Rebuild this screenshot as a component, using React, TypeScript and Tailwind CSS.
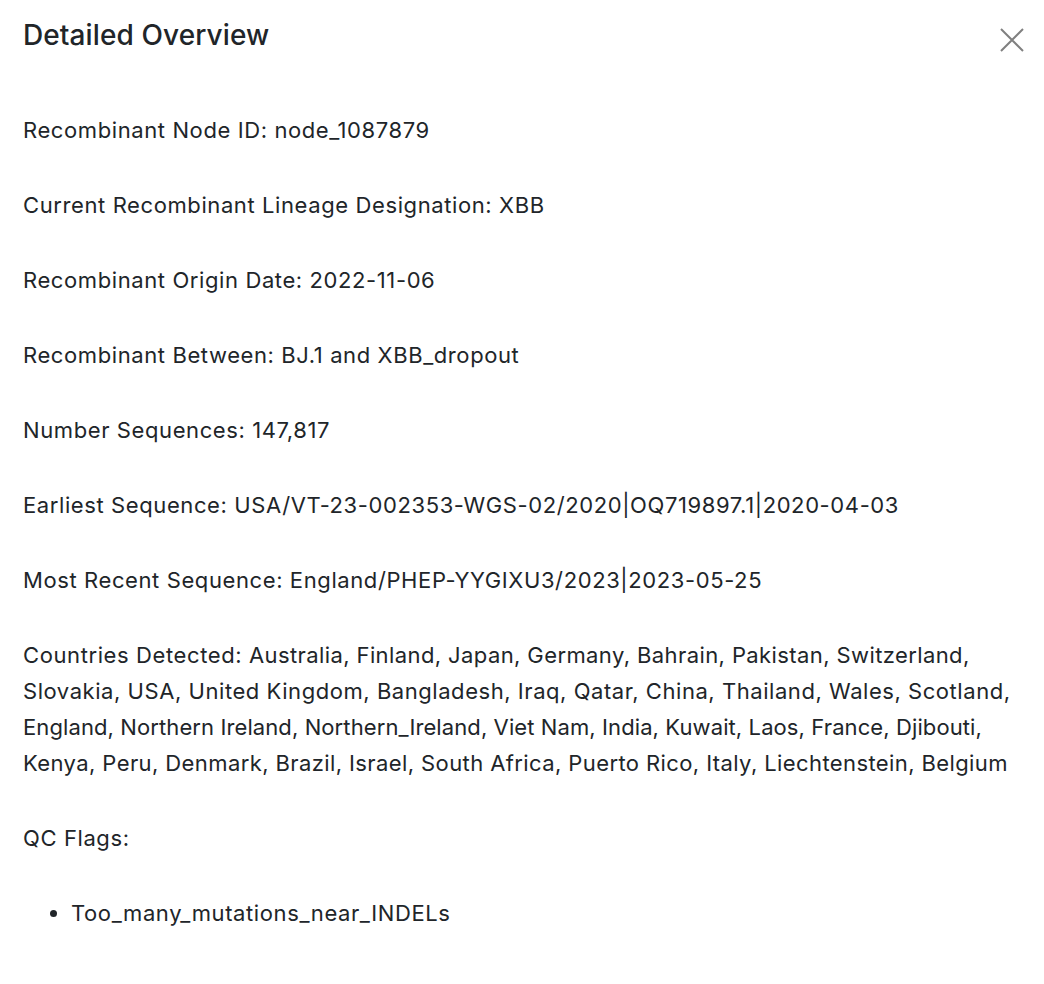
const countryLines = [
  { text: "Australia, Finland, Japan, Germany, Bahrain, Pakistan, Switzerland,", cls: "tracking-[0.4px]" },
  { text: "Slovakia, USA, United Kingdom, Bangladesh, Iraq, Qatar, China, Thailand, Wales, Scotland,", cls: "tracking-[0.55px]" },
  { text: "England, Northern Ireland, Northern_Ireland, Viet Nam, India, Kuwait, Laos, France, Djibouti,", cls: "tracking-[0.1px]" },
  { text: "Kenya, Peru, Denmark, Brazil, Israel, South Africa, Puerto Rico, Italy, Liechtenstein, Belgium", cls: "tracking-[0.4px]" },
];

const rows = [
  "Recombinant Node ID: node_1087879",
  "Current Recombinant Lineage Designation: XBB",
  "Recombinant Origin Date: 2022-11-06",
  "Recombinant Between: BJ.1 and XBB_dropout",
  "Number Sequences: 147,817",
  "Earliest Sequence: USA/VT-23-002353-WGS-02/2020|OQ719897.1|2020-04-03",
  "Most Recent Sequence: England/PHEP-YYGIXU3/2023|2023-05-25",
];

export default function App() {
  return (
    <div
      className="min-h-screen bg-white text-[#212529]"
      style={{ fontFamily: "Inter, 'Noto Sans', sans-serif" }}
    >
      {/* Header */}
      <div className="flex items-start justify-between pl-[23px] pr-[20px] pt-[17px]">
        <h2 className="text-[28px] font-medium leading-[36px] tracking-[0.1px]">Detailed Overview</h2>
        <button className="mt-[11px] text-[#808080]">
          <svg width="24" height="24" viewBox="0 0 24 24" fill="none" stroke="currentColor" strokeWidth="2">
            <path d="M1 1L23 23M23 1L1 23" />
          </svg>
        </button>
      </div>

      {/* Body */}
      <div className="flex flex-col gap-[39px] pl-[23px] pr-[4px] pt-[59px] text-[22px] leading-[36px] tracking-[0.6px]">
        {rows.map((r) => (
          <p key={r}>{r}</p>
        ))}
        <p className="whitespace-nowrap">
          {countryLines.map((l, i) => (
            <span key={i} className={`block ${l.cls}`}>
              {i === 0 && <span className="tracking-[0.6px]">Countries Detected: </span>}
              {l.text}
            </span>
          ))}
        </p>
        <p>QC Flags:</p>
        <ul className="list-disc pl-[48px]">
          <li>Too_many_mutations_near_INDELs</li>
        </ul>
      </div>
    </div>
  );
}
